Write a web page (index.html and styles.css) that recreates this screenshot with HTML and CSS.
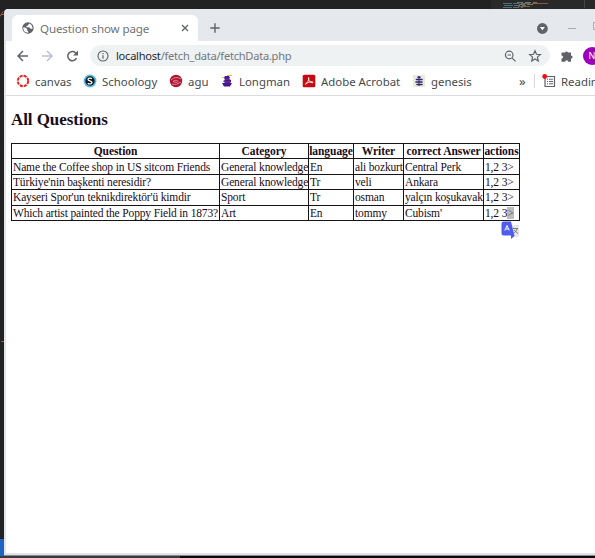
FILE: index.html
```html
<!DOCTYPE html>
<html lang="en">
<head>
<meta charset="utf-8">
<title>Question show page</title>
<link rel="stylesheet" href="styles.css">
</head>
<body>
<div class="desktop">
  <svg class="backdrop" width="595" height="558" viewBox="0 0 595 558">
    <path fill="#292929" d="M491 0h104v9H491z"/><path fill="#444" d="M584 0h1v8h-1z"/>
    <path stroke="#526f80" stroke-dasharray="9 1 6 2" d="M503 3.500h28M504 5.500h22M503 7.500h20"/>
    <path stroke="#7c7753" stroke-dasharray="6 2" d="M517 2.500h20M519 4.500h15"/>
    <path stroke="#875b43" d="M532 3.500h16M518 6.500h12"/>
    <path stroke="#9b5a42" d="M0 16.500l3-5M1 14.500h3M1 341.500h3"/>
    <path fill="#2162c5" d="M0 539h5v17H0z"/><path fill="#363b40" d="M0 556h180v2H0z"/><path fill="#0b0b0d" d="M180 555h415v3H180z"/>
  </svg>
  <div class="window">
    <header class="tabs">
      <div class="tab">
        <svg class="globe" width="12" height="12" viewBox="0 0 12 12"><circle cx="6" cy="6" r="5.700" fill="#5f6368"/><path fill="#fff" d="M1.200 5.500h2l2 1.500v1.500l1 1v1.200C3.500 10.800 1.200 9 1.200 5.500M7 1.500l-1 2-1.500.500v1.300h2.800l1.200 1.500h2c.300-2.500-1-4.500-3.500-5.300"/></svg>
        <span class="tab-title">Question show page</span>
        <svg class="close" width="8" height="8" viewBox="0 0 8 8"><path d="M1 1l6 6M7 1L1 7" stroke="#5f6368" stroke-width="1.300"/></svg>
      </div>
      <svg class="plus" width="10" height="10" viewBox="0 0 10 10"><path d="M5 .300v9.400M.300 5h9.400" stroke="#5f6368" stroke-width="1.400"/></svg>
      <svg class="controls" width="60" height="14" viewBox="0 0 60 14"><circle cx="5.400" cy="7.500" r="5.400" fill="#5f6368"/><path d="M2.900 6h5L5.400 9.300z" fill="#fff"/><path d="M31 7.500h8M56.500 1.500h6v7h-6z" fill="none" stroke="#aaacb0"/></svg>
    </header>
    <nav class="toolbar">
      <svg class="navicons" width="62" height="14" viewBox="0 0 62 14" fill="none" stroke-width="1.500"><path d="M11 7H1.500M6 2L1 7l5 5" stroke="#5f6368"/><path d="M25 7h9.500M30 2l5 5-5 5" stroke="#bdc1c6"/><path d="M59.500 9.200A4.600 4.600 0 1 1 58.500 3.700L60 5.200" stroke="#5f6368"/><path d="M61 1.500v5h-5z" fill="#5f6368"/></svg>
      <div class="address">
        <svg width="12" height="12" viewBox="0 0 12 12"><circle cx="6" cy="6" r="5" fill="none" stroke="#5f6368" stroke-width="1.100"/><path d="M6 5.200v3.500M6 3v1.200" stroke="#5f6368" stroke-width="1.200"/></svg>
        <span class="url"><b>localhost</b>/fetch_data/fetchData.php</span>
        <svg class="tools" width="38" height="14" viewBox="0 0 38 14" fill="none" stroke="#5f6368" stroke-width="1.200"><circle cx="5.200" cy="6" r="3.800"/><path d="M8 8.800l3.600 3.600M3.500 6h3.500M31 1.800l1.500 3.500 3.800.300-2.900 2.500.9 3.800-3.300-2-3.300 2 .9-3.800-2.900-2.500 3.800-.300z"/></svg>
      </div>
      <svg class="puzzle" width="12" height="12" viewBox="0 0 12 12"><path fill="#5f6368" d="M.500 2.500H4a1.600 1.600 0 0 1 3 0h3v3a1.600 1.600 0 0 1 0 3.200v3H7.200a1.500 1.500 0 0 0-3 0H.500V8.600a1.500 1.500 0 0 0 0-3z"/></svg>
      <span class="avatar">N</span>
    </nav>
    <nav class="bookmarks">
      <a class="bm canvas"><svg viewBox="0 0 14 14"><circle cx="7" cy="7" r="5.200" fill="none" stroke="#ed2020" stroke-width="2" stroke-dasharray="3.100 .984"/></svg><span>canvas</span></a>
      <a class="bm schoology"><svg viewBox="0 0 14 14"><circle cx="7" cy="7" r="6.400" fill="#56bce5"/><circle cx="7" cy="7" r="4.700" fill="#101820"/><path d="M9 4.700C8 3.800 5 3.900 5 5.400 5 7 9 6.800 9 8.600c0 1.600-3.200 1.600-4.200.600" fill="none" stroke="#fff" stroke-width="1.300"/></svg><span>Schoology</span></a>
      <a class="bm agu"><svg viewBox="0 0 14 14"><circle cx="7" cy="7" r="6.200" fill="#ad1531"/><path d="M2 6c3-3 7-3 10-1M4 7.500c2-2 5-1 5 0s-3 1-5 0M3 10c3 1 6 0 9-2" fill="none" stroke="#e8a8b2" stroke-width=".8"/></svg><span>agu</span></a>
      <a class="bm longman"><svg viewBox="0 0 14 14"><path fill="#4c168b" d="M5 2h4l1 2-1 1 2 1v2l-1 1h2l-2 3.500H4L2 9h3L3 7l2-1-1-2z"/><path stroke="#d5cc35" d="M7 1.500h5M2 3.500h2"/><path stroke="#9878b9" stroke-width=".4" d="M4 5h5M4 8h6"/></svg><span>Longman</span></a>
      <a class="bm adobe"><svg viewBox="0 0 14 14"><rect x=".7" y=".8" width="12.600" height="12.400" rx="1.500" fill="#c70b12"/><path d="M3.200 10.500C5.500 9 7.300 5.500 6.800 3.800 6.300 2.500 6 6 8 7.800c1.500 1.300 3.500 1 3 .3-.6-.8-5.500-.2-7.800 2.400" fill="none" stroke="#fff" stroke-width=".9"/></svg><span>Adobe Acrobat</span></a>
      <a class="bm genesis"><svg viewBox="0 0 14 14"><path fill="#e5edda" d="M1 1h12v12H1z"/><path stroke="#362078" stroke-width="1.600" stroke-linecap="round" d="M6 3.200h2M4.500 5.500h5.500M4 8h6M5 10.500h5"/><path stroke="#362078" d="M7 2v10"/></svg><span>genesis</span></a>
      <span class="more">»</span>
      <div class="reading"><svg width="14" height="14" viewBox="0 0 14 14"><path d="M3 2.500h9.500v10H3z" fill="none" stroke="#5f6368" stroke-width="1.200"/><path d="M5 5.200h1m1 0h4M5 7.500h1m1 0h4M5 9.800h1m1 0h4" stroke="#5f6368"/><circle cx="2.700" cy="2.500" r="2.400" fill="#f30a12"/></svg><span>Reading list</span></div>
    </nav>
    <main>
      <h2>All Questions</h2>
      <table>
        <colgroup><col class="c-question"><col class="c-category"><col class="c-language"><col class="c-writer"><col class="c-answer"><col class="c-actions"></colgroup>
        <tr><th>Question</th><th>Category</th><th>language</th><th>Writer</th><th>correct Answer</th><th>actions</th></tr>
        <tr><td>Name the Coffee shop in US sitcom Friends</td><td>General knowledge</td><td>En</td><td>ali bozkurt</td><td>Central Perk</td><td>1,2 3&gt;</td></tr>
        <tr><td>Türkiye'nin başkenti neresidir?</td><td>General knowledge</td><td>Tr</td><td>veli</td><td>Ankara</td><td>1,2 3&gt;</td></tr>
        <tr><td>Kayseri Spor'un teknikdirektör'ü kimdir</td><td>Sport</td><td>Tr</td><td>osman</td><td>yalçın koşukavak</td><td>1,2 3&gt;</td></tr>
        <tr><td>Which artist painted the Poppy Field in 1873?</td><td>Art</td><td>En</td><td>tommy</td><td>Cubism'</td><td>1,2 3<mark>&gt;</mark></td></tr>
      </table>
    </main>
  </div>
  <svg class="translate" width="19" height="19" viewBox="0 0 19 19"><path fill="#e4e6e9" d="M8 4h10v12h-7z"/><path d="M12 7.500h5M16 8c-.5 2-2 3.500-3.500 4M13 9l4 3.500" stroke="#777b80" fill="none"/><path fill="#4f5bea" d="M2.500.500H10L13.500 15l-3.500 3v-3.500H2.500a2 2 0 0 1-2-2v-10a2 2 0 0 1 2-2"/><path d="M3.800 9.500L6 4.500l2.200 5M4.700 8h2.600" stroke="#fff" fill="none"/></svg>
</div>
</body>
</html>
```
FILE: styles.css
```css
* { box-sizing: border-box; }
body { margin: 0; overflow: hidden; }
svg { display: block; flex: none; }
.desktop { position: relative; width: 595px; height: 558px; overflow: hidden; background: #222; padding: 9px 0 0 4px; }
.backdrop { position: absolute; left: 0; top: 0; }
.window { position: relative; width: 620px; height: 546px; background: #fff; border-left: 2px solid #e2e6eb; border-bottom: 2px solid #dfe4e9; border-radius: 4px 0 0 0; box-shadow: 0 1px #858991; overflow: hidden; font-family: "Noto Sans", sans-serif; color: #45494d; }
.tabs { height: 32px; background: #e5e8ed; display: flex; align-items: flex-end; }
.tab { width: 186px; height: 26px; margin-left: 6px; border-radius: 6px 6px 0 0; background: #fff; display: flex; align-items: center; padding: 0 9px 0 10px; }
.tab-title { font-size: 11.6px; color: #707377; margin-left: 6px; width: 138px; white-space: nowrap; letter-spacing: -.13px; }
.close { margin-left: 3px; }
.plus { margin: 0 0 8px 12px; }
.controls { margin: 0 0 6px 317px; }
.toolbar { height: 29px; display: flex; align-items: center; }
.navicons { margin-left: 11px; }
.address { width: 460px; height: 21px; border-radius: 11px; background: #eff2f3; margin-left: 11px; display: flex; align-items: center; padding: 0 8px 0 7px; }
.url { margin-left: 7px; width: 386px; font-size: 11.1px; color: #74777b; white-space: nowrap; letter-spacing: -.25px; }
.url b { color: #26282b; font-weight: 400; }
.tools { margin-left: 4px; }
.puzzle { margin-left: 11px; }
.avatar { width: 18px; height: 18px; border-radius: 50%; background: #9c00bd; color: #fff; margin-left: 10px; font-size: 9px; line-height: 18px; text-align: center; }
.bookmarks { height: 26px; border-bottom: 1px solid #d9dce0; display: flex; align-items: center; padding: 0 0 3px 10px; font-size: 11.4px; white-space: nowrap; }
.bm { display: flex; align-items: center; gap: 5px; height: 20px; }
.bm svg { width: 14px; height: 14px; }
.canvas { width: 67px; }
.schoology { width: 86px; }
.agu { width: 51px; }
.longman { width: 82px; }
.adobe { width: 110px; }
.genesis { width: 107px; }
.more { width: 15px; font-size: 13px; }
.reading { height: 14px; border-left: 1px solid #d7d9dc; padding-left: 7px; display: flex; align-items: center; gap: 5px; }
main { padding: 14px 0 0 5px; font-family: "Liberation Serif", serif; color: #190b17; }
h2 { margin: 0; font-size: 17px; line-height: 20px; font-weight: 700; letter-spacing: -.08px; }
table { margin-top: 13px; width: 509px; table-layout: fixed; border-collapse: collapse; font-size: 11.5px; line-height: 14px; letter-spacing: -.15px; }
.c-question { width: 208px; }
.c-category { width: 89px; }
.c-language { width: 45px; }
.c-writer { width: 50px; }
.c-answer { width: 80px; }
.c-actions { width: 36px; }
tr { height: 15.4px; }
td, th { border: 1px solid #171319; padding: 0 0 0 1px; white-space: nowrap; }
th { padding: 0; letter-spacing: -.05px; }
mark { background: #bcbcbc; color: #555; }
.translate { position: absolute; left: 501px; top: 221px; }
```
